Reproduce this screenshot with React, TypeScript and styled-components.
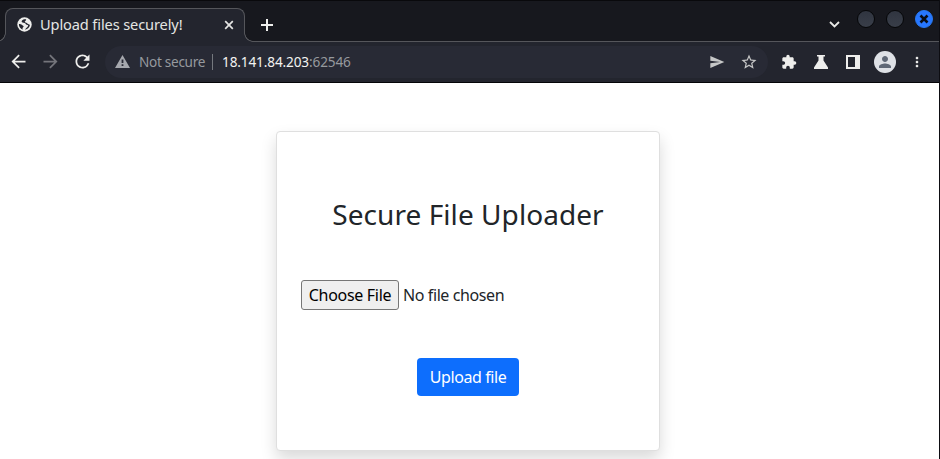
import React from "react";
import styled, { createGlobalStyle } from "styled-components";
import {
  MdArrowBack,
  MdArrowForward,
  MdRefresh,
  MdSend,
  MdStarBorder,
  MdExtension,
  MdPerson,
  MdMoreVert,
} from "react-icons/md";

const GlobalStyle = createGlobalStyle`
  * { box-sizing: border-box; }
  body { margin: 0; background: #fff; overflow: hidden; font-family: "Noto Sans", "Open Sans", sans-serif; }
`;

const Window = styled.div`
  width: 940px;
  height: 459px;
  display: flex;
  flex-direction: column;
  border-right: 1px solid #0d0d12;
  overflow: hidden;
  background: #fff;
`;

const TitleBar = styled.header`
  height: 42px;
  flex: none;
  display: flex;
  align-items: flex-start;
  padding-left: 5px;
  border-top: 1px solid #09090c;
  background: linear-gradient(#17181e, #17181e) top / 100% 40px no-repeat, #55565b;
`;

const Tab = styled.div`
  position: relative;
  width: 240px;
  height: 34px;
  margin-top: 7px;
  padding: 0 0 2px 11px;
  display: flex;
  align-items: center;
  border: 1px solid #55565b;
  border-bottom: 0;
  border-radius: 8px 8px 0 0;
  background: #23252e;

  &::before,
  &::after {
    content: "";
    position: absolute;
    bottom: 0;
    width: 9px;
    height: 9px;
    background: radial-gradient(circle at 0 0, #17181e 7.5px, #55565b 8px, #55565b 8.5px, #23252e 9px);
  }
  &::before {
    left: -9px;
  }
  &::after {
    right: -9px;
    transform: scaleX(-1);
  }
`;

const TabTitle = styled.span`
  width: 183px;
  margin-left: 8px;
  font-size: 14.6px;
  line-height: 20px;
  letter-spacing: -0.12px;
  color: #e5e5e3;
  white-space: nowrap;
  padding-bottom: 1px;
`;

const Glyph = styled.svg`
  display: block;
  flex: none;
`;

const NewTab = styled.div`
  margin: 18px 0 0 16px;
`;

const WindowControls = styled.div`
  margin: 9px 6px 0 auto;
  display: flex;
  align-items: center;
  gap: 11px;
`;

const Chevron = styled.div`
  margin: 11px 6px 0 0;
`;

const RoundControl = styled.div<{ $close?: boolean }>`
  width: 18px;
  height: 18px;
  display: grid;
  place-items: center;
  border-radius: 50%;
  border: 1px solid ${(p) => (p.$close ? "#2878f0" : "#060709")};
  background: ${(p) => (p.$close ? "#2777ff" : "linear-gradient(#303540, #393e49)")};
`;

const Toolbar = styled.nav`
  height: 41px;
  flex: none;
  display: flex;
  align-items: center;
  padding: 0 12px 1px 8px;
  background: #23252e;
  border-bottom: 1px solid #050508;
  color: #eeeeec;
`;

const NavButtons = styled.div`
  display: flex;
  gap: 11px;
  width: 97px;
  svg { display: block; flex: none; }
`;

const Dimmed = styled.span`
  color: #74757b;
`;

const AddressBar = styled.div`
  width: 663px;
  height: 32px;
  display: flex;
  align-items: center;
  padding: 0 10px 0 10px;
  border-radius: 16px;
  background: #282a35;
  color: #96999e;
`;

const Security = styled.span`
  width: 74px;
  margin-left: 9px;
  font-size: 13.6px;
  letter-spacing: -0.3px;
  white-space: nowrap;
`;

const Divider = styled.span`
  width: 1px;
  height: 16px;
  margin-left: -1px;
  background: #75787e;
`;

const Url = styled.span`
  margin-left: 9px;
  font-size: 13.6px;
  letter-spacing: -0.13px;
  white-space: nowrap;
`;

const Host = styled.span`
  color: #f3f3f1;
`;

const AddressActions = styled.div`
  margin-left: auto;
  display: flex;
  align-items: center;
  gap: 15px;
  color: #c6c7c7;
`;

const Tools = styled.div`
  margin-left: 13px;
  display: flex;
  align-items: center;
`;

const ToolSlot = styled.div<{ $width: number }>`
  width: ${(p) => p.$width}px;
  flex: none;
  display: flex;
  justify-content: center;
`;

const Avatar = styled.div`
  width: 22px;
  height: 22px;
  display: grid;
  place-items: center;
  border-radius: 50%;
  background: #dee1e6;
  color: #5f6876;
`;

const Page = styled.main`
  flex: 1;
  display: flex;
  justify-content: center;
  align-items: flex-start;
  padding: 48px 3px 0 0;
  background: #fff;
  overflow: hidden;
`;

const Card = styled.form`
  width: 384px;
  height: 320px;
  flex: none;
  padding: 63px 24px 0;
  display: flex;
  flex-direction: column;
  align-items: center;
  border: 1px solid #dfdfdf;
  border-radius: 4px;
  background: #fff;
  box-shadow: 0 8px 16px rgba(0, 0, 0, 0.15);
  color: #212529;
`;

const Heading = styled.h1`
  margin: 0;
  font-size: 28px;
  line-height: 38px;
  font-weight: 400;
  letter-spacing: 0.06px;
  white-space: nowrap;
`;

const FileRow = styled.div`
  align-self: stretch;
  height: 30px;
  margin-top: 47px;
  display: flex;
  align-items: center;
  font-size: 16px;
  white-space: nowrap;
`;

const ChooseButton = styled.button`
  width: 98px;
  height: 30px;
  padding: 0;
  margin-right: 4px;
  border: 1px solid #767676;
  border-radius: 3px;
  background: #efefef;
  color: #000;
  font: 400 16px "Noto Sans", sans-serif;
  letter-spacing: -0.3px;
`;

const FileStatus = styled.span`
  letter-spacing: -0.4px;
`;

const UploadButton = styled.button`
  width: 102px;
  height: 38px;
  margin-top: 48px;
  padding: 0;
  border: 0;
  border-radius: 4px;
  background: #0d6efd;
  color: #fff;
  font: 400 16px "Noto Sans", sans-serif;
  letter-spacing: -0.42px;
`;

export default function App() {
  return (
    <>
      <GlobalStyle />
      <Window>
        <TitleBar>
          <Tab>
            <Glyph width="15" height="15" viewBox="0 0 15 15">
              <circle cx="7.5" cy="7.5" r="7.2" fill="#eeeeec" />
              <path
                d="M9.2 2.2C7.2 2 4.8 2.6 4.6 4.3c-.1 1.3 1.6 1.5 3 1.7 1 .2.9 1.5 2.3 1.7 1.3.1 1.6.7.9 1.7-.9 1.3-2.1 1.7-2.7 3.3 2.6-.4 4.6-2.4 4.8-4.6-.6-1-2-.5-2.5-1.5-.5-1.2-1.8-.8-2.6-1.6-.4-.9 1.4-1.2 1.4-2.8zM1.9 7.1c1.4 0 2.3.2 3.2 1 .8.7 1.5.6 1.5 1.5 0 .8-1 .9-1.1 1.8-.1.6.2 1 .3 1.4C3.4 12 1.8 9.700 1.9 7.100z"
                fill="#23252e"
              />
            </Glyph>
            <TabTitle>Upload files securely!</TabTitle>
            <Glyph width="12" height="12" viewBox="0 0 12 12">
              <path d="M2.2 2.2l7.6 7.6M9.8 2.2L2.2 9.8" stroke="#e5e5e3" strokeWidth="1.7" />
            </Glyph>
          </Tab>
          <NewTab>
            <Glyph width="12" height="12" viewBox="0 0 12 12">
              <path d="M6 0v12M0 6h12" stroke="#eeeeec" strokeWidth="2" />
            </Glyph>
          </NewTab>
          <WindowControls>
            <Chevron>
              <Glyph width="11" height="7" viewBox="0 0 11 7">
                <path d="M1 1l4.5 4.5L10 1" fill="none" stroke="#e8e8e6" strokeWidth="1.8" />
              </Glyph>
            </Chevron>
            <RoundControl />
            <RoundControl />
            <RoundControl $close>
              <Glyph width="10" height="10" viewBox="0 0 10 10">
                <path d="M1.5 1.5l7 7M8.5 1.5l-7 7" stroke="#090d16" strokeWidth="2.6" />
              </Glyph>
            </RoundControl>
          </WindowControls>
        </TitleBar>

        <Toolbar>
          <NavButtons>
            <MdArrowBack size={21} />
            <Dimmed>
              <MdArrowForward size={21} />
            </Dimmed>
            <MdRefresh size={21} />
          </NavButtons>
          <AddressBar>
            <Glyph width="15" height="13" viewBox="0 0 15 13">
              <path d="M7.5 0L15 13H0zM6.6 4.5v3.6h1.8V4.5zM6.6 9.3v1.8h1.8V9.3z" fill="#a6a8ae" fillRule="evenodd" />
            </Glyph>
            <Security>Not secure</Security>
            <Divider />
            <Url>
              <Host>18.141.84.203</Host>:62546
            </Url>
            <AddressActions>
              <MdSend size={16} />
              <MdStarBorder size={18} />
            </AddressActions>
          </AddressBar>
          <Tools>
            <ToolSlot $width={16}>
              <MdExtension size={16} />
            </ToolSlot>
            <ToolSlot $width={48}>
              <Glyph width="14" height="14" viewBox="0 0 14 14">
                <path d="M3 0h8v1.5H9.5v4L14 12.5V14H0v-1.5L4.5 5.5v-4H3z" fill="currentColor" />
              </Glyph>
            </ToolSlot>
            <ToolSlot $width={16}>
              <Glyph width="14" height="14" viewBox="0 0 14 14">
                <path d="M0 0h14v14H0zM2 2v10h7V2z" fill="currentColor" fillRule="evenodd" />
              </Glyph>
            </ToolSlot>
            <ToolSlot $width={48}>
              <Avatar>
                <MdPerson size={18} />
              </Avatar>
            </ToolSlot>
            <ToolSlot $width={16}>
              <MdMoreVert size={20} />
            </ToolSlot>
          </Tools>
        </Toolbar>

        <Page>
          <Card onSubmit={(event) => event.preventDefault()}>
            <Heading>Secure File Uploader</Heading>
            <FileRow>
              <ChooseButton type="button">Choose File</ChooseButton>
              <FileStatus>No file chosen</FileStatus>
            </FileRow>
            <UploadButton type="submit">Upload file</UploadButton>
          </Card>
        </Page>
      </Window>
    </>
  );
}
